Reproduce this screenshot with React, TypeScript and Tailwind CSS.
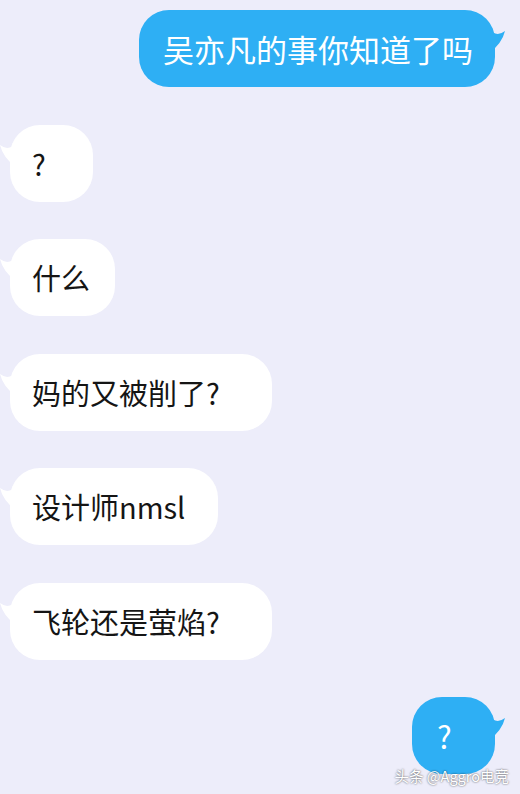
import type { ReactNode } from 'react'

const font = { fontFamily: '"Noto Sans CJK SC", "Noto Sans", sans-serif' }

function LeftTail() {
  return (
    <svg className="absolute -left-[11px] top-[13px]" width="18" height="30" viewBox="0 0 18 30">
      <path d="M18 4 Q10 14 1 7 Q4 20 18 30 Z" fill="#ffffff" />
    </svg>
  )
}

function RightTail() {
  return (
    <svg className="absolute -right-[11px] top-[14px]" width="18" height="30" viewBox="0 0 18 30">
      <path d="M0 4 Q8 14 17 7 Q14 20 0 30 Z" fill="#2eaff4" />
    </svg>
  )
}

function Incoming({ children, className }: { children: ReactNode; className: string }) {
  return (
    <div
      className={`relative ml-[10px] flex h-[77px] items-center rounded-[30px] bg-white pl-[22px] text-[29px] text-[#151515] ${className}`}
    >
      <LeftTail />
      <span className="leading-none">{children}</span>
    </div>
  )
}

function Outgoing({ children, className }: { children: ReactNode; className: string }) {
  return (
    <div
      className={`relative mr-[25px] flex h-[77px] items-center self-end rounded-[30px] bg-[#2eaff4] text-[31px] text-white ${className}`}
    >
      <RightTail />
      <span className="leading-none">{children}</span>
    </div>
  )
}

export default function App() {
  return (
    <main className="relative flex h-[794px] w-[520px] flex-col gap-[37.5px] overflow-hidden bg-[#ededfa] pt-[10px]" style={font}>
      <Outgoing className="w-[356px] pl-[24px]">吴亦凡的事你知道了吗</Outgoing>
      <Incoming className="w-[83px]">?</Incoming>
      <Incoming className="w-[105px]">什么</Incoming>
      <Incoming className="w-[262px]">妈的又被削了?</Incoming>
      <Incoming className="w-[208px]">设计师nmsl</Incoming>
      <Incoming className="w-[262px]">飞轮还是萤焰?</Incoming>
      <Outgoing className="w-[83px] pl-[25px]">?</Outgoing>
      <div className="absolute bottom-[11px] right-[11px] text-[14.5px] leading-none text-white [text-shadow:0_0_2px_rgba(0,0,0,0.75)]">
        头条 @Aggro电竞
      </div>
    </main>
  )
}
